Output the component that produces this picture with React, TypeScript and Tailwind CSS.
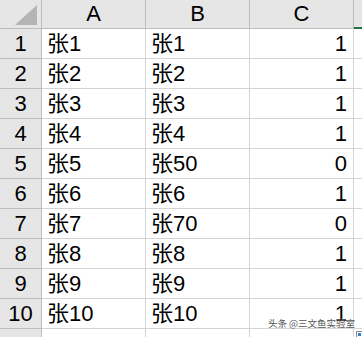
import React from 'react'

const rows: [string, string, number][] = [
  ['张1', '张1', 1],
  ['张2', '张2', 1],
  ['张3', '张3', 1],
  ['张4', '张4', 1],
  ['张5', '张50', 0],
  ['张6', '张6', 1],
  ['张7', '张70', 0],
  ['张8', '张8', 1],
  ['张9', '张9', 1],
  ['张10', '张10', 1],
]

const font = { fontFamily: '"Liberation Sans", "Noto Sans CJK SC", sans-serif' }

function App() {
  return (
    <div className="relative w-[362px] h-[337px] overflow-hidden bg-white text-[22px] text-black" style={font}>
      <div className="grid grid-cols-[42px_104px_104px_104px_1fr]">
        <div className="h-[29px] bg-[#e6e6e6] border-r border-b border-[#bcbcbc] flex items-end justify-end pr-[4px] pb-[3px]">
          <svg width="22" height="20" viewBox="0 0 22 20">
            <polygon points="22,0 22,20 0,20" fill="#b4b4b4" />
          </svg>
        </div>
        {['A', 'B', 'C'].map((c) => (
          <div key={c} className="h-[29px] bg-[#e6e6e6] border-r border-b border-[#bcbcbc] flex items-center justify-center leading-none">
            {c}
          </div>
        ))}
        <div className="h-[29px] bg-[#e6e6e6] border-b-2 border-[#217346]" />

        {rows.map(([a, b, c], i) => (
          <React.Fragment key={i}>
            <div className="h-[30px] bg-[#e6e6e6] border-r border-b border-[#bcbcbc] flex items-center justify-center leading-none">
              {i + 1}
            </div>
            <div className="h-[30px] border-r border-b border-[#d4d4d4] flex items-center pl-[5px] leading-none">{a}</div>
            <div className="h-[30px] border-r border-b border-[#d4d4d4] flex items-center pl-[5px] leading-none">{b}</div>
            <div className="h-[30px] border-r border-b border-[#d4d4d4] flex items-center justify-end pr-[6px] leading-none">{c}</div>
            <div className="h-[30px] border-b border-[#d4d4d4]" />
          </React.Fragment>
        ))}

        <div className="h-[30px] bg-[#e6e6e6] border-r border-[#bcbcbc]" />
        <div className="h-[30px] border-r border-[#d4d4d4]" />
        <div className="h-[30px] border-r border-[#d4d4d4]" />
        <div className="h-[30px] border-r border-[#d4d4d4]" />
        <div className="h-[30px]" />
      </div>

      <div className="absolute right-[7px] bottom-[9px] text-[9.5px] leading-none text-[#555] [text-shadow:0_0_2px_#fff]" style={{ fontFamily: '"Noto Sans CJK SC", sans-serif' }}>
        头条 @三文鱼实验室
      </div>
      <div className="absolute right-0 bottom-0 w-[6px] h-[6px] border-l border-t border-[#888] bg-white">
        <div className="ml-[1px] mt-[1px] w-[3px] h-[3px] bg-[#3b78d8]" />
      </div>
    </div>
  )
}

export default App
